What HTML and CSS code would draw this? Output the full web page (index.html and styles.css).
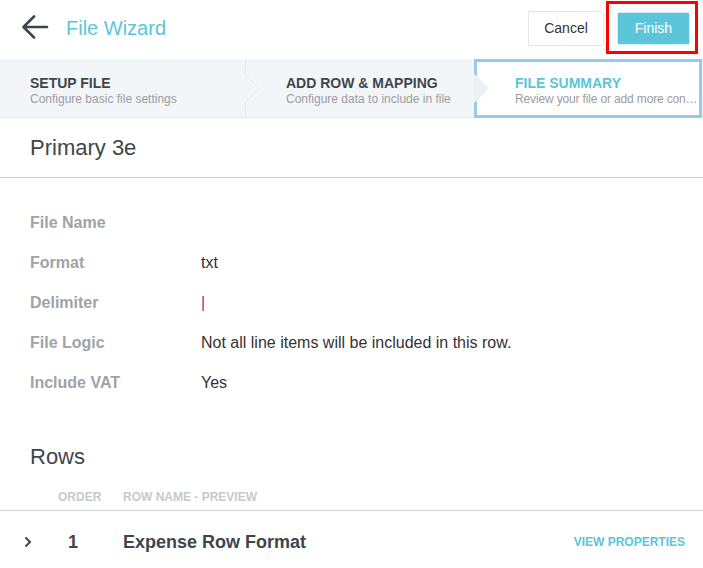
FILE: index.html
```html
<!DOCTYPE html>
<html>
<head>
  <title>File Wizard</title>
  <link rel="stylesheet" href="styles.css">
</head>
<body>
  <div class="topbar">
    <a class="back" href="#">
      <svg width="28" height="26" viewBox="0 0 28 26">
        <path d="M26 12H3M13 1.5L2.5 12L13 22.5" fill="none" stroke="#3e464c" stroke-width="2.6" stroke-linecap="round" stroke-linejoin="round"/>
      </svg>
    </a>
    <h1 class="title">File Wizard</h1>
    <div class="actions">
      <button class="btn btn-cancel">Cancel</button>
      <div class="highlight">
        <button class="btn btn-finish">Finish</button>
      </div>
    </div>
  </div>

  <!-- wizard steps -->
  <div class="steps">
    <div class="step step-first">
      <div class="step-title">SETUP FILE</div>
      <div class="step-sub">Configure basic file settings</div>
      <svg class="step-arrow" width="16" height="59" viewBox="0 0 16 59">
        <path d="M0 15L14 29.5L0 44Z" fill="#f3f6f9"/>
        <path d="M0.5 0V15.5L14 29.5L0.5 43.5V59" fill="none" stroke="#e3e7ea" stroke-width="1"/>
      </svg>
    </div>
    <div class="step">
      <div class="step-title">ADD ROW &amp; MAPPING</div>
      <div class="step-sub">Configure data to include in file</div>
      <svg class="step-arrow" width="16" height="59" viewBox="0 0 16 59">
        <path d="M0 15L14 29.5L0 44Z" fill="#eef1f3"/>
        <path d="M0.5 15.5L14 29.5L0.5 43.5" fill="none" stroke="#e6e9ec" stroke-width="1"/>
      </svg>
    </div>
    <div class="step step-active">
      <div class="step-title">FILE SUMMARY</div>
      <div class="step-sub step-sub-short">Review your file or add more con…</div>
    </div>
  </div>

  <div class="summary-head">Primary 3e</div>

  <div class="details">
    <div class="detail"><span class="label">File Name</span><span class="value"></span></div>
    <div class="detail"><span class="label">Format</span><span class="value">txt</span></div>
    <div class="detail"><span class="label">Delimiter</span><span class="value delim">|</span></div>
    <div class="detail"><span class="label">File Logic</span><span class="value">Not all line items will be included in this row.</span></div>
    <div class="detail"><span class="label">Include VAT</span><span class="value">Yes</span></div>
  </div>

  <h2 class="rows-title">Rows</h2>

  <div class="table">
    <div class="thead">
      <span class="col-toggle"></span>
      <span class="col-order">ORDER</span>
      <span class="col-name">ROW NAME - PREVIEW</span>
    </div>
    <div class="trow">
      <span class="col-toggle">
        <svg width="10" height="12" viewBox="0 0 10 12">
          <path d="M2.5 1.5L7 6L2.5 10.5" fill="none" stroke="#3e464c" stroke-width="2"/>
        </svg>
      </span>
      <span class="col-order order-num">1</span>
      <span class="col-name row-name">Expense Row Format</span>
      <a class="row-link" href="#">VIEW PROPERTIES</a>
    </div>
  </div>
</body>
</html>
```

FILE: styles.css
```css
body {
  margin: 0;
  background-color: white;
  color: #333;
  font-family: "Liberation Sans", Arial, sans-serif;
}

.topbar {
  height: 59px;
  box-sizing: border-box;
  display: flex;
  align-items: center;
  padding: 0 13px 3px 21px;
}

.back {
  display: flex;
  width: 28px;
  height: 26px;
}

.title {
  margin: 0 0 0 17px;
  font-size: 20px;
  font-weight: normal;
  color: #5bc5d9;
}

.actions {
  margin-left: auto;
  display: flex;
  align-items: center;
  gap: 13px;
}

.btn {
  font-family: inherit;
  font-size: 14px;
  border-radius: 2px;
  cursor: pointer;
}

.btn-cancel {
  width: 76px;
  height: 35px;
  background-color: white;
  color: #333;
  border: 1px solid #e2e4e6;
}

.btn-finish {
  width: 73px;
  height: 33px;
  background-color: #5bc5d9;
  color: white;
  border: 1px solid #d4eef3;
}

.highlight {
  position: relative;
  display: flex;
}

.highlight::after {
  content: "";
  position: absolute;
  top: -11px;
  bottom: -9px;
  left: -11px;
  right: -8px;
  border: 3px solid #ff0000;
}

.steps {
  display: flex;
  height: 59px;
  background-color: #f3f6f9;
}

.step {
  position: relative;
  width: 229px;
  box-sizing: border-box;
  padding: 16px 0 0 41px;
  border-bottom: 1px solid #e4e7ea;
}

.step-first {
  width: 245px;
  padding-left: 30px;
}

.step-active {
  flex: 1;
  min-width: 0;
  margin-right: 1px;
  background-color: white;
  border: 3px solid #98c9ef;
  padding: 13px 0 0 38px;
}

.step-title {
  font-size: 14px;
  font-weight: bold;
  color: #3e464c;
  line-height: 16px;
}

.step-active .step-title {
  color: #5bc5d9;
}

.step-sub {
  font-size: 12px;
  color: #9a9da0;
  line-height: 16px;
  white-space: nowrap;
}

.step-sub-short {
  letter-spacing: -0.15px;
}

.step-arrow {
  position: absolute;
  top: 0;
  left: 100%;
  z-index: 2;
}

.summary-head {
  height: 59px;
  display: flex;
  align-items: center;
  padding-left: 30px;
  font-size: 22px;
  color: #3e464c;
  border-bottom: 1px solid #cfcfcf;
}

.details {
  padding: 25px 30px 0;
}

.detail {
  display: flex;
  align-items: center;
  height: 40px;
  font-size: 16px;
}

.label {
  width: 171px;
  font-weight: bold;
  color: #a0a3a6;
}

.value {
  color: #333;
}

.delim {
  color: #7c3f74;
}

.rows-title {
  margin: 39px 0 0 30px;
  font-size: 22px;
  font-weight: normal;
  line-height: 30px;
  color: #3e464c;
}

.thead {
  display: flex;
  padding: 18px 0 6px;
  font-size: 12px;
  font-weight: bold;
  line-height: 14px;
  color: #c8c9ca;
  border-bottom: 1px solid #d2d2d2;
}

.col-toggle {
  width: 58px;
  display: flex;
  padding-left: 23px;
  box-sizing: border-box;
}

.col-order {
  width: 65px;
}

.trow {
  display: flex;
  align-items: center;
  height: 62px;
  padding-right: 18px;
}

.order-num {
  font-size: 18px;
  font-weight: bold;
  color: #3e464c;
  padding-left: 10px;
  box-sizing: border-box;
}

.row-name {
  font-size: 18px;
  font-weight: bold;
  color: #3e464c;
}

.row-link {
  margin-left: auto;
  font-size: 12px;
  font-weight: bold;
  color: #5bc5d9;
  text-decoration: none;
}
```
